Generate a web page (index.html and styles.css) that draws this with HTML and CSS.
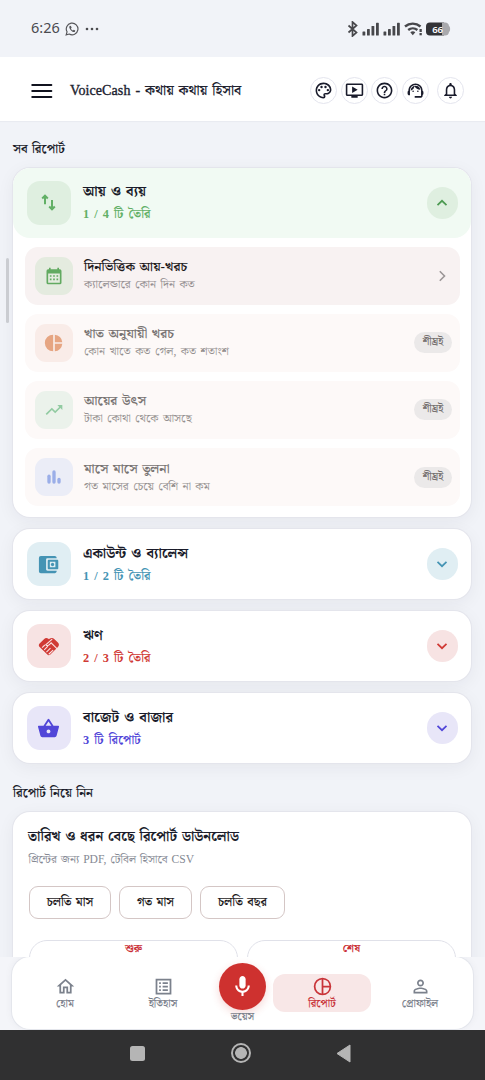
FILE: index.html
```html
<!DOCTYPE html>
<html lang="bn">
<head>
<meta charset="utf-8">
<meta name="viewport" content="width=device-width">
<title>VoiceCash</title>
<link rel="stylesheet" href="styles.css">
</head>
<body>
<div class="phone">
  <div class="status">
    <span class="clock">6:26</span>
    <svg class="wa" width="14" height="14" viewBox="0 0 24 24"><path d="M2 22l1.500-5.200A10 10 0 1 1 7.300 20.600z" fill="none" stroke="#555559" stroke-width="2"/><path d="M8.500 6.500c-2 1-1.500 4 1 7s5.500 4.500 7.500 3l.5-2-2.500-1.300-1.300 1.300c-1.500-.5-3-2-3.500-3.500l1.200-1.300-1.200-3z" fill="#555559"/></svg>
    <svg class="dots" width="14" height="4" viewBox="0 0 14 4" fill="#4c4c50"><circle cx="2" cy="2" r="1.300"/><circle cx="7" cy="2" r="1.300"/><circle cx="12" cy="2" r="1.300"/></svg>
    <span class="grow"></span>
    <svg width="106" height="16" viewBox="0 0 106 16" fill="#47474b">
      <path d="M1.500 4.500l8 7-4 3.500V1l4 3.500-8 7" fill="none" stroke="#47474b" stroke-width="1.700"/>
      <g id="sig"><rect x="15.500" y="10.500" width="2.800" height="4" rx=".6"/><rect x="20" y="8" width="2.800" height="6.500" rx=".6"/><rect x="24.500" y="5" width="2.800" height="9.500" rx=".6"/><rect x="29" y="1.800" width="2.800" height="12.700" rx=".6"/></g>
      <use href="#sig" x="21"/>
      <path d="M58 5.500a12 12 0 0 1 15.500 0M61.200 9a7.200 7.200 0 0 1 9.200 0" fill="none" stroke="#47474b" stroke-width="2.400"/><path d="M63.300 11.300a4 4 0 0 1 5 0l-2.500 3z"/><rect x="72.500" y="8" width="2.300" height="3"/><rect x="72.500" y="12" width="2.300" height="2.300"/>
      <path d="M83 1.500h14v13H83a4 4 0 0 1-4-4v-5a4 4 0 0 1 4-4z" fill="#333337"/><path d="M95 1.500h3a4 4 0 0 1 4 3.500c1.500.5 1.500 5.500 0 6a4 4 0 0 1-4 3.500h-3z" fill="#a9a9ad"/>
      <text x="85.200" y="11.700" class="batt">66</text>
    </svg>
  </div>

  <header class="top">
    <svg class="menu" width="22" height="16" viewBox="0 0 22 16"><path d="M1.300 2h19M1.300 8h19M1.300 14h19" stroke="#11131f" stroke-width="2.100" stroke-linecap="round"/></svg>
    <h1 class="brand"><span class="latin">VoiceCash -</span> <span class="bn">কথায় কথায় হিসাব</span></h1>
    <div class="actions">
      <span class="round"><svg viewBox="0 0 24 24"><path d="M12 22C6.490 22 2 17.510 2 12S6.490 2 12 2s10 4.040 10 9c0 3.310-2.690 6-6 6h-1.770c-.28 0-.5.22-.5.5 0 .12.050.23.130.33.410.47.640 1.060.640 1.670A2.500 2.500 0 0 1 12 22zm0-18c-4.410 0-8 3.590-8 8s3.590 8 8 8c.28 0 .5-.22.5-.5a.54.54 0 0 0-.140-.35c-.41-.46-.63-1.050-.63-1.650a2.500 2.500 0 0 1 2.500-2.500H16c2.210 0 4-1.790 4-4 0-3.860-3.590-7-8-7z"/><circle cx="6.500" cy="11.500" r="1.500"/><circle cx="9.500" cy="7.500" r="1.500"/><circle cx="14.500" cy="7.500" r="1.500"/><circle cx="17.500" cy="11.500" r="1.500"/></svg></span>
      <span class="round"><svg viewBox="0 0 24 24"><path d="M21 3H3c-1.110 0-2 .89-2 2v12c0 1.100.89 2 2 2h5v2h8v-2h5c1.100 0 2-.9 2-2V5c0-1.110-.9-2-2-2zm0 14H3V5h18v12zM9 7l7 4-7 4z"/></svg></span>
      <span class="round"><svg viewBox="0 0 24 24"><path d="M11 18h2v-2h-2v2zm1-16C6.480 2 2 6.480 2 12s4.480 10 10 10 10-4.480 10-10S17.520 2 12 2zm0 18c-4.410 0-8-3.590-8-8s3.590-8 8-8 8 3.590 8 8-3.590 8-8 8zm0-14c-2.210 0-4 1.790-4 4h2c0-1.100.9-2 2-2s2 .9 2 2c0 2-3 1.750-3 5h2c0-2.250 3-2.500 3-5 0-2.210-1.790-4-4-4z"/></svg></span>
      <span class="round"><svg viewBox="0 0 24 24"><path d="M21 12.220C21 6.730 16.740 3 12 3c-4.690 0-9 3.650-9 9.280-.6.340-1 .98-1 1.720v2c0 1.100.9 2 2 2h1v-6.100c0-3.870 3.130-7 7-7s7 3.130 7 7V19h-8v2h8c1.100 0 2-.9 2-2v-1.220c.59-.31 1-.92 1-1.640v-2.300c0-.7-.41-1.310-1-1.620z"/><circle cx="9" cy="13" r="1"/><circle cx="15" cy="13" r="1"/><path d="M18 11.030A6.040 6.040 0 0 0 12.050 6c-3.030 0-6.290 2.510-6.030 6.450a8.070 8.070 0 0 0 4.860-5.890c1.310 2.630 4 4.440 7.120 4.470z"/></svg></span>
      <span class="round bell"><svg viewBox="0 0 24 24"><path d="M12 22c1.100 0 2-.9 2-2h-4c0 1.100.9 2 2 2zm6-6v-5c0-3.070-1.630-5.640-4.500-6.320V4c0-.83-.67-1.500-1.500-1.500s-1.500.67-1.500 1.500v.68C7.640 5.360 6 7.920 6 11v5l-2 2v1h16v-1l-2-2zm-2 1H8v-6c0-2.480 1.510-4.500 4-4.500s4 2.020 4 4.500v6z"/></svg></span>
    </div>
  </header>

  <main class="content">
    <h2 class="label">সব রিপোর্ট</h2>

    <section class="card open">
      <div class="head green">
        <span class="tile"><svg viewBox="0 0 24 24" width="21" height="21"><path d="M8 14V4.500M4.800 7.500L8 4.300l3.200 3.200M16 9v10.500M12.800 16.500l3.200 3.200 3.200-3.200" fill="none" stroke="currentColor" stroke-width="2.300"/></svg></span>
        <div class="txt"><h3>আয় ও ব্যয়</h3><p>1 / 4 টি তৈরি</p></div>
        <span class="chev"><svg viewBox="0 0 12 8"><path d="M1.500 6.200L6 1.800l4.500 4.400"/></svg></span>
      </div>
      <div class="items">
        <div class="item ready">
          <span class="mini m-green"><svg viewBox="0 0 24 24" width="20" height="20" fill="currentColor"><path fill-rule="evenodd" d="M19 4h-1V2h-2v2H8V2H6v2H5a2 2 0 0 0-2 2v14a2 2 0 0 0 2 2h14a2 2 0 0 0 2-2V6a2 2 0 0 0-2-2zm0 16H5V9h14zM7 11h2v2H7zm4 0h2v2h-2zm4 0h2v2h-2zm-8 4h2v2H7zm4 0h2v2h-2zm4 0h2v2h-2z"/></svg></span>
          <div class="txt"><h4>দিনভিত্তিক আয়-খরচ</h4><p>ক্যালেন্ডারে কোন দিন কত</p></div>
          <svg class="go" width="8" height="12" viewBox="0 0 8 12"><path d="M1.800 1.300L6.500 6l-4.700 4.700"/></svg>
        </div>
        <div class="item">
          <span class="mini m-orange"><svg viewBox="0 0 24 24" width="20" height="20" fill="currentColor"><path d="M11 2v20a10 10 0 0 1 0-20zm2 0v9h9a10 10 0 0 0-9-9zm0 11v9a10 10 0 0 0 9-9z"/></svg></span>
          <div class="txt"><h4>খাত অনুযায়ী খরচ</h4><p>কোন খাতে কত গেল, কত শতাংশ</p></div>
          <span class="soon">শীঘ্রই</span>
        </div>
        <div class="item">
          <span class="mini m-mint"><svg viewBox="0 0 24 24" width="20" height="20" fill="currentColor"><path d="M16 6l2.290 2.290-4.880 4.880-4-4L2 16.590 3.410 18l6-6 4 4 6.300-6.290L22 12V6z"/></svg></span>
          <div class="txt"><h4>আয়ের উৎস</h4><p>টাকা কোথা থেকে আসছে</p></div>
          <span class="soon">শীঘ্রই</span>
        </div>
        <div class="item">
          <span class="mini m-blue"><svg viewBox="0 0 24 24" width="20" height="20" fill="currentColor"><rect x="4" y="9" width="4" height="11" rx="2"/><rect x="10" y="4" width="4" height="16" rx="2"/><rect x="16" y="13" width="4" height="7" rx="2"/></svg></span>
          <div class="txt"><h4>মাসে মাসে তুলনা</h4><p>গত মাসের চেয়ে বেশি না কম</p></div>
          <span class="soon">শীঘ্রই</span>
        </div>
      </div>
    </section>

    <section class="card">
      <div class="head teal">
        <span class="tile"><svg viewBox="0 0 24 24" width="23" height="23" fill="currentColor"><path d="M9.500 17V7c0-1 .6-1.500 1.500-1.500h9.500V5c0-1.100-.9-2-2-2H4a2 2 0 0 0-2 2v14a2 2 0 0 0 2 2h14.500c1.100 0 2-.9 2-2v-.5H11c-.9 0-1.500-.5-1.500-1.500z"/><path fill-rule="evenodd" d="M12.500 7H21c.8 0 1.200.4 1.200 1.200v7.600c0 .8-.4 1.200-1.200 1.200h-8.500c-.8 0-1.300-.4-1.300-1.200V8.200c0-.8.5-1.200 1.300-1.200zm.9 2.200v5.600h5.800V9.200z"/><circle cx="16.200" cy="12" r="1.700"/></svg></span>
        <div class="txt"><h3>একাউন্ট ও ব্যালেন্স</h3><p>1 / 2 টি তৈরি</p></div>
        <span class="chev"><svg viewBox="0 0 12 8"><path d="M1.500 1.800L6 6.200l4.500-4.400"/></svg></span>
      </div>
    </section>

    <section class="card">
      <div class="head red">
        <span class="tile"><svg viewBox="0 0 24 24" width="22" height="22"><path fill="currentColor" d="M1.500 9.500L6.500 4.500c1.500-1.500 3.300-1.500 4.800-.5l.7.600.9-.7c1.500-1.100 3.500-.9 4.800.4l4 4c1.500 1.500 1.500 3.200.1 4.700l-8.300 8.200c-1.100 1.100-2.500 1-3.300.1L1.500 12.700c-.8-.9-.8-2.200 0-3.200z"/><path d="M15.500 4.500l-7 6.200c1.600 1.400 3.200.6 4.500-.8l1.300-1.300 7.200 7M4.500 13.800l3-2.900M6.800 16.200l4-4M9.200 18.600l4.400-4.400M11.700 21l4.800-4.600" fill="none" stroke="#f9e2e2" stroke-width="1.200"/></svg></span>
        <div class="txt"><h3>ঋণ</h3><p>2 / 3 টি তৈরি</p></div>
        <span class="chev"><svg viewBox="0 0 12 8"><path d="M1.500 1.800L6 6.200l4.500-4.400"/></svg></span>
      </div>
    </section>

    <section class="card">
      <div class="head violet">
        <span class="tile"><svg viewBox="0 0 24 24" width="23" height="23" fill="currentColor"><path d="M17.210 9l-4.380-6.560a.99.99 0 0 0-1.660 0L6.790 9H2c-.55 0-1 .45-1 1 0 .090.010.18.040.27l2.540 9.270c.23.840 1 1.460 1.920 1.460h13c.92 0 1.690-.62 1.930-1.460l2.540-9.270L23 10c0-.55-.45-1-1-1h-4.790zM9 9l3-4.400L15 9H9zm3 8c-1.100 0-2-.9-2-2s.9-2 2-2 2 .9 2 2-.9 2-2 2z"/></svg></span>
        <div class="txt"><h3>বাজেট ও বাজার</h3><p>3 টি রিপোর্ট</p></div>
        <span class="chev"><svg viewBox="0 0 12 8"><path d="M1.500 1.800L6 6.200l4.500-4.400"/></svg></span>
      </div>
    </section>

    <h2 class="label second">রিপোর্ট নিয়ে নিন</h2>

    <section class="card download">
      <h3>তারিখ ও ধরন বেছে রিপোর্ট ডাউনলোড</h3>
      <p>প্রিন্টের জন্য PDF, টেবিল হিসাবে CSV</p>
      <div class="chips"><span class="c1">চলতি মাস</span><span class="c2">গত মাস</span><span class="c3">চলতি বছর</span></div>
      <div class="dates"><span>শুরু</span><span>শেষ</span></div>
    </section>
    <span class="scroll"></span>
  </main>

  <div class="dock">
    <nav class="nav">
      <a class="tab"><svg viewBox="0 0 24 24"><path d="M12 5.690l5 4.500V18h-2v-6H9v6H7v-7.810l5-4.500M12 3L2 12h3v8h6v-6h2v6h6v-8h3z"/></svg><b>হোম</b></a>
      <a class="tab"><svg viewBox="0 0 24 24"><path fill-rule="evenodd" d="M3 3h18v18H3zm2 2v14h14V5zm2 2h2v2H7zm4 0h6v2h-6zm-4 4h2v2H7zm4 0h6v2h-6zm-4 4h2v2H7zm4 0h6v2h-6z"/></svg><b>ইতিহাস</b></a>
      <a class="voice"><span class="mic"><svg viewBox="0 0 24 24" width="25" height="25" fill="#fff"><path d="M12 14c1.660 0 3-1.340 3-3V5c0-1.660-1.340-3-3-3S9 3.340 9 5v6c0 1.660 1.340 3 3 3z"/><path d="M17 11c0 2.760-2.240 5-5 5s-5-2.240-5-5H5c0 3.530 2.610 6.430 6 6.920V21h2v-3.080c3.390-.49 6-3.390 6-6.920z"/></svg></span><b>ভয়েস</b></a>
      <a class="tab on"><svg viewBox="0 0 24 24"><path fill-rule="evenodd" d="M12 2a10 10 0 1 0 0 20 10 10 0 0 0 0-20zm1 2.070A8 8 0 0 1 19.930 11H13zM4 12a8 8 0 0 1 7-7.930v15.860A8 8 0 0 1 4 12zm9 7.930V13h6.930A8 8 0 0 1 13 19.930z"/></svg><b>রিপোর্ট</b></a>
      <a class="tab"><svg viewBox="0 0 24 24"><path d="M12 5.900a2.100 2.100 0 1 1 0 4.200 2.100 2.100 0 0 1 0-4.200m0 9c2.970 0 6.100 1.460 6.100 2.100v1.100H5.900V17c0-.64 3.130-2.100 6.100-2.100M12 4C9.790 4 8 5.790 8 8s1.790 4 4 4 4-1.790 4-4-1.790-4-4-4zm0 9c-2.670 0-8 1.340-8 4v3h16v-3c0-2.660-5.330-4-8-4z"/></svg><b>প্রোফাইল</b></a>
    </nav>
  </div>

  <div class="system">
    <span class="sq"></span>
    <span class="ring"></span>
    <svg width="15" height="19" viewBox="0 0 15 19"><path d="M14 1v17L1 9.500z" fill="#b5b5b5" stroke="#b5b5b5" stroke-linejoin="round"/></svg>
  </div>
</div>
</body>
</html>
```
FILE: styles.css
```css
* { box-sizing: border-box; margin: 0; }
body {
  width: 485px; height: 1080px; overflow: hidden;
  background: #f1f3f8; color: #1a1c2a;
  font-family: "Liberation Serif", "Noto Serif Bengali", "Noto Sans Bengali", serif;
}
.phone { width: 485px; height: 1080px; display: flex; flex-direction: column; }
h1, h2, h3, h4, p, span, b { white-space: nowrap; }
.grow { flex: 1; }

.status { height: 57px; padding: 0 32px 0 31px; display: flex; align-items: center; }
.clock { font: 14.500px/20px "Noto Sans", sans-serif; color: #4b4b50; width: 34px; padding-bottom: 3px; }
.wa { margin-top: 0; }
.dots { margin-left: 6px; }
.batt { font: 600 9.500px "Noto Sans", sans-serif; fill: #fff; }

.top { height: 64px; background: #fff; display: flex; align-items: center; padding: 3px 21.500px 0 31px; box-shadow: 0 1px 1px #e9ebf1; }
.brand { margin-left: 17px; font-size: 13.700px; font-weight: 600; line-height: 22px; color: #20222f; flex: 1; word-spacing: 1.300px; }
.latin { font-size: 14px; font-weight: 400; -webkit-text-stroke: .35px; letter-spacing: .1px; }
.actions { display: flex; gap: 3.600px; }
.round { width: 27px; height: 27px; border: 1px solid #e4e5ee; border-radius: 50%; display: grid; place-items: center; }
.round svg { width: 19px; height: 19px; fill: #191b2b; }
.bell { margin-left: 4px; }

.content { height: 835.500px; overflow: hidden; padding: 17px 14px 0 13px; position: relative; }
.label { height: 22px; font-size: 12.600px; line-height: 22px; font-weight: 600; margin-bottom: 8px; word-spacing: 1px; }
.label.second { margin: 19px 0 8px; }
.card { background: #fff; border-radius: 17px; margin-bottom: 12px; box-shadow: 0 0 0 1px #e4e5ec, 0 4px 18px rgba(30, 30, 50, .06); overflow: hidden; }
.card.open { height: 349px; }
.head { height: 70px; display: flex; align-items: center; padding: 0 13px 0 13.500px; border-radius: 17px; }
.open .head { height: 69.500px; }
.tile { width: 44.500px; height: 44.500px; border-radius: 13px; display: grid; place-items: center; }
.txt { flex: 1; }
.head .txt { padding: 1px 0 0 12px; }
.head h3 { font-size: 14px; line-height: 22px; font-weight: 700; color: #191b2a; word-spacing: 1.600px; }
.head p { font-size: 12.300px; line-height: 22px; font-weight: 600; word-spacing: 2px; }
.chev { width: 31.500px; height: 31.500px; border-radius: 50%; display: grid; place-items: center; }
.chev svg { width: 12px; height: 8px; fill: none; stroke: currentColor; stroke-width: 1.700; }
.green { background: #f1faf3; }
.green p, .green .tile, .green .chev { color: #62b066; }
.green .tile, .green .chev { background: #dfefe0; }
.green .chev { color: #4d9a52; }
.teal p, .teal .tile, .teal .chev { color: #4594b4; }
.teal .tile, .teal .chev { background: #e0eef3; }
.red p, .red .tile, .red .chev { color: #d03a35; }
.red .tile, .red .chev { background: #f7e3e3; }
.violet p, .violet .tile, .violet .chev { color: #5146d8; }
.violet .tile, .violet .chev { background: #e8e6f8; }

.items { padding: 9px 11px 0 12px; display: grid; gap: 9.200px; }
.item { height: 58px; border-radius: 13px; background: #fdf9f8; display: flex; align-items: center; padding: 0 8px 0 10px; }
.item.ready { background: #f8f2f2; padding-right: 14.500px; }
.mini { width: 38px; height: 38px; border-radius: 11px; display: grid; place-items: center; }
.m-green { background: #e4ebdf; color: #62aa61; }
.m-orange { background: #f9ece8; color: #e6a582; }
.m-mint { background: #ebf2eb; color: #92cba2; }
.m-blue { background: #ebedf7; color: #9baee8; }
.item .txt { padding-left: 11px; padding-bottom: 0; }
.item h4 { font-size: 13.300px; line-height: 19px; font-weight: 600; color: #777372; word-spacing: 1.200px; }
.item p { font-size: 11.600px; line-height: 18px; color: #94908f; word-spacing: 1.500px; }
.ready h4 { color: #1d191b; }
.ready p { color: #938e90; }
.go { fill: none; stroke: #9b9697; stroke-width: 1.600; }
.soon { width: 38px; height: 21px; border-radius: 11px; background: #ebe9e9; color: #777271; font-size: 10.300px; line-height: 20px; font-weight: 600; text-align: center; }

.download { height: 200px; padding: 14px 15px 0 16px; margin: 0; }
.download h3 { font-size: 14px; line-height: 22px; font-weight: 700; word-spacing: 1.200px; margin-left: -1px; }
.download p { font-size: 11.600px; line-height: 20px; margin: 2px 0 0 -.5px; color: #858993; word-spacing: 1px; }
.chips { display: flex; gap: 8px; margin-top: 16px; }
.chips span { height: 33px; border: 1px solid #d4c6c5; border-radius: 9px; font-size: 12.200px; line-height: 30px; font-weight: 600; color: #1d191b; text-align: center; word-spacing: 1.200px; }
.c1 { width: 82px; } .c2 { width: 73px; } .c3 { width: 85px; }
.dates { display: flex; gap: 9px; margin-top: 21px; }
.dates span { flex: 1; height: 48px; border: 1px solid #e0e1e9; border-radius: 18px; font-size: 10.500px; line-height: 15px; font-weight: 700; color: #ca2e35; text-align: center; }
.scroll { position: absolute; left: 6px; top: 137px; width: 3px; height: 65px; border-radius: 2px; background: #caccd1; }

.dock { height: 73.500px; padding: 0 12px; background: #f4f5f9; }
.nav { height: 72.500px; background: #fff; border-radius: 18px; display: flex; box-shadow: 0 0 0 1px #e4e6ec, 0 0 8px rgba(30, 30, 60, .06); padding: 0 4px; }
.tab { width: 98px; height: 38px; margin-top: 17px; border-radius: 12px; display: flex; flex-direction: column; align-items: center; color: #7b818c; padding-top: 2px; }
.tab svg { width: 21px; height: 21px; fill: currentColor; }
.tab b, .voice b { font-size: 10.500px; line-height: 13px; font-weight: 600; }
.tab.on { background: #f8e7e7; color: #c93439; }
.voice { width: 61px; display: flex; flex-direction: column; align-items: center; color: #7b818c; padding-top: 6.500px; }
.mic { width: 47px; height: 47px; border-radius: 50%; background: #ce312f; display: grid; place-items: center; box-shadow: 0 3px 8px rgba(206, 49, 47, .2); }

.system { height: 50px; background: #303031; display: flex; align-items: center; padding: 0 134px 4px 130px; justify-content: space-between; }
.sq { width: 15px; height: 15px; border-radius: 2.500px; background: #b5b5b5; }
.ring { width: 20px; height: 20px; border-radius: 50%; border: 2px solid #b5b5b5; background: radial-gradient(circle, #b5b5b5 5.500px, #303031 6.200px); }
```
